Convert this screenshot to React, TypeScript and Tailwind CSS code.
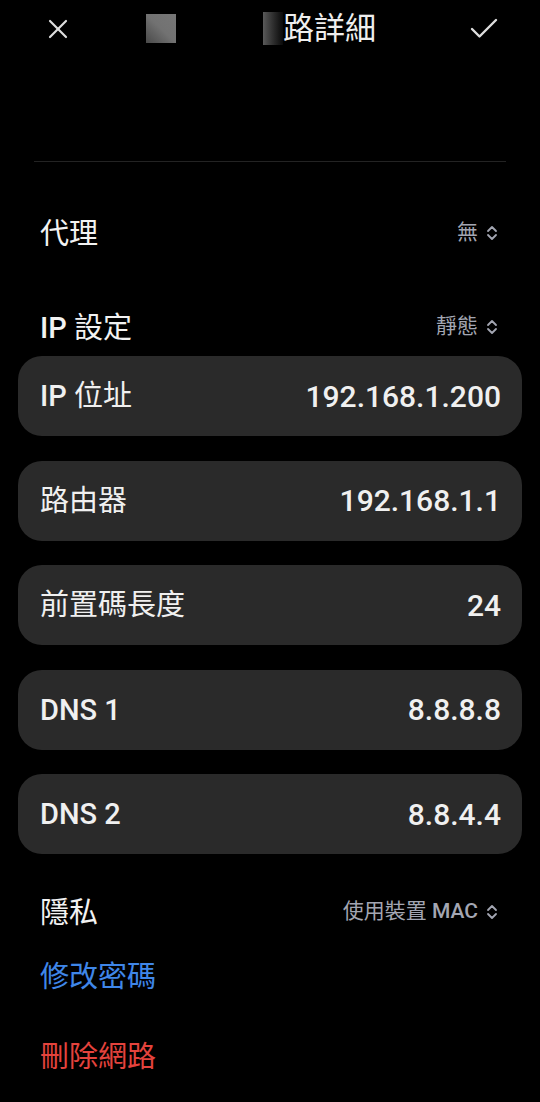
import { X, Check } from 'lucide-react'

const font = { fontFamily: "Roboto, 'Noto Sans CJK TC', sans-serif" }

function UpDown() {
  return (
    <svg width="12" height="18" viewBox="0 0 12 18" fill="none" stroke="currentColor" strokeWidth="1.8" strokeLinecap="round" strokeLinejoin="round">
      <path d="M2 7 L6 3 L10 7" />
      <path d="M2 11 L6 15 L10 11" />
    </svg>
  )
}

// Latin words are medium weight, CJK stays regular
function Mixed({ text }: { text: string }) {
  return (
    <>
      {text.split(/([A-Za-z0-9]+)/).map((part, i) =>
        /[A-Za-z0-9]/.test(part) ? (
          <span key={i} className="font-medium">{part}</span>
        ) : (
          <span key={i}>{part}</span>
        ),
      )}
    </>
  )
}

function Picker({ label, value, className }: { label: string; value: string; className: string }) {
  return (
    <div className={`flex items-center justify-between pl-[40px] pr-[42px] ${className}`}>
      <span className="text-[29px] text-[#f2f2f2] pt-[3px]">
        <Mixed text={label} />
      </span>
      <span className="flex items-center gap-[8px] text-[21px] text-[#a3a6b2]">
        <span>
          <Mixed text={value} />
        </span>
        <UpDown />
      </span>
    </div>
  )
}

const fields = [
  { label: 'IP 位址', value: '192.168.1.200' },
  { label: '路由器', value: '192.168.1.1' },
  { label: '前置碼長度', value: '24' },
  { label: 'DNS 1', value: '8.8.8.8' },
  { label: 'DNS 2', value: '8.8.4.4' },
]

export default function App() {
  return (
    <div className="w-[540px] h-[1102px] bg-black overflow-hidden flex flex-col" style={font}>
      <div className="h-[57px] flex items-center">
        <X className="ml-[42px] text-[#dedede]" size={32} strokeWidth={1.6} />
        <div className="ml-[72px] w-[30px] h-[29px] bg-gradient-to-tr from-[#4a4a4a] via-[#727272] to-[#777]" />
        <div className="ml-[87px] w-[20px] h-[33px] bg-gradient-to-r from-[#5a5a5a] to-[#0a0a0a]" />
        <span className="text-[31px] text-[#eeeeee] leading-none">路詳細</span>
        <Check className="ml-auto mr-[38px] text-[#dedede]" size={36} strokeWidth={1.6} />
      </div>
      <div className="h-[104px]" />
      <div className="mx-[34px] h-px bg-[#232323]" />
      <Picker label="代理" value="無" className="h-[142px]" />
      <Picker label="IP 設定" value="靜態" className="h-[46px]" />
      <div className="mt-[6px] mx-[18px] flex flex-col gap-[24.5px]">
        {fields.map((f) => (
          <div key={f.label} className="h-[80px] rounded-[24px] bg-[#2a2a2a] flex items-center justify-between pl-[22px] pr-[21px]">
            <span className="text-[29px] text-[#f0f0f0] pt-[2px]">
              <Mixed text={f.label} />
            </span>
            <span className="text-[30px] font-medium text-[#f0f0f0]">{f.value}</span>
          </div>
        ))}
      </div>
      <Picker label="隱私" value="使用裝置 MAC" className="mt-[28px] h-[60px]" />
      <div className="mt-[6px] h-[60px] flex items-center pl-[40px] text-[29px] text-[#3f86e8]">修改密碼</div>
      <div className="mt-[20px] h-[60px] flex items-center pl-[40px] text-[29px] text-[#e4433d]">刪除網路</div>
    </div>
  )
}
